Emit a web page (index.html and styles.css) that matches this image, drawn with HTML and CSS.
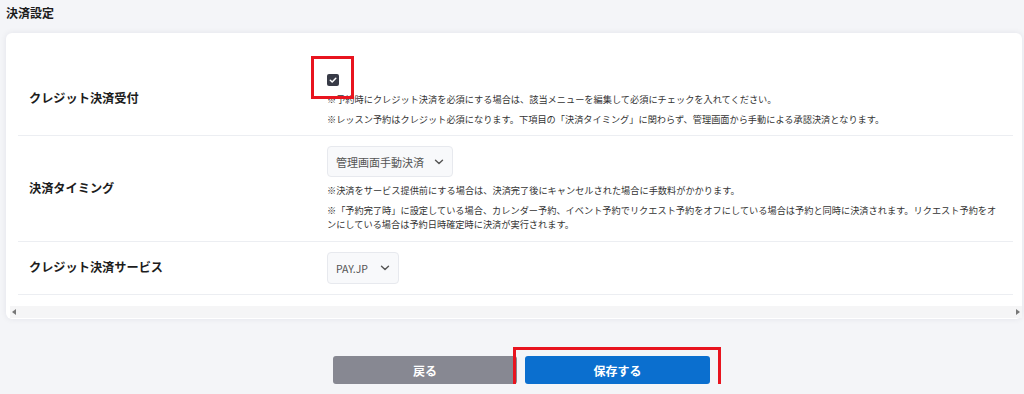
FILE: index.html
```html
<!DOCTYPE html>
<html lang="ja">
<head>
  <meta charset="UTF-8">
  <meta name="viewport" content="width=device-width, initial-scale=1.0">
  <title>決済設定</title>
  <link rel="stylesheet" href="styles.css">
</head>
<body>
  <h2 class="page-title">決済設定</h2>

  <div class="card">
    <div class="row row-first">
      <div class="label">クレジット決済受付</div>
      <div class="field">
        <span class="checkbox">
          <svg width="8" height="8" viewBox="0 0 8 8"><path d="M1.3 4.2 L3.2 6 L6.8 2.2" fill="none" stroke="#fff" stroke-width="1.5" stroke-linecap="round" stroke-linejoin="round"/></svg>
          <span class="mark mark-check"></span>
        </span>
        <p class="note">※予約時にクレジット決済を必須にする場合は、該当メニューを編集して必須にチェックを入れてください。</p>
        <p class="note">※レッスン予約はクレジット必須になります。下項目の「決済タイミング」に関わらず、管理画面から手動による承認決済となります。</p>
      </div>
    </div>

    <div class="row">
      <div class="label">決済タイミング</div>
      <div class="field">
        <div class="select select-wide">
          <span>管理画面手動決済</span>
          <svg width="10" height="6" viewBox="0 0 10 6"><path d="M1.5 1.2 L5 4.6 L8.5 1.2" fill="none" stroke="#555" stroke-width="1.4" stroke-linecap="round" stroke-linejoin="round"/></svg>
        </div>
        <p class="note">※決済をサービス提供前にする場合は、決済完了後にキャンセルされた場合に手数料がかかります。</p>
        <p class="note">※「予約完了時」に設定している場合、カレンダー予約、イベント予約でリクエスト予約をオフにしている場合は予約と同時に決済されます。リクエスト予約をオンにしている場合は予約日時確定時に決済が実行されます。</p>
      </div>
    </div>

    <div class="row">
      <div class="label">クレジット決済サービス</div>
      <div class="field">
        <div class="select select-small">
          <span>PAY.JP</span>
          <svg width="10" height="6" viewBox="0 0 10 6"><path d="M1.5 1.2 L5 4.6 L8.5 1.2" fill="none" stroke="#555" stroke-width="1.4" stroke-linecap="round" stroke-linejoin="round"/></svg>
        </div>
      </div>
    </div>

    <div class="scrollbar">
      <span class="arrow arrow-left"></span>
      <span class="arrow arrow-right"></span>
    </div>
  </div>

  <div class="actions">
    <button class="btn btn-back">戻る</button>
    <div class="save-frame">
      <button class="btn btn-save">保存する</button>
    </div>
  </div>
</body>
</html>
```

FILE: styles.css
```css
body {
  margin: 0;
  padding: 6px 2px 0 6px;
  background-color: #f4f5f8;
  font-family: "Noto Sans CJK JP", "Noto Sans", sans-serif;
  color: #222;
}
.page-title {
  margin: 0;
  font-size: 12px;
  line-height: 14px;
  font-weight: bold;
  color: #1c1c1c;
}
.card {
  margin-top: 13px;
  background-color: white;
  border-radius: 6px;
  box-shadow: 0 0 6px rgba(20,30,60,0.08);
  padding: 31px 9px 1px 12px;
}
.row {
  display: flex;
  align-items: center;
  padding: 10px 0 10px 11px;
  border-bottom: 1px solid #eceef2;
}
.row-first {
  padding-bottom: 9px;
}
.row-first .label {
  padding-bottom: 4px;
}
.label {
  width: 298px;
  flex-shrink: 0;
  padding-bottom: 2px;
  font-size: 12.2px;
  font-weight: bold;
  color: #1c1c1c;
}
.field {
  flex: 1;
  padding-right: 14px;
}
.checkbox {
  position: relative;
  display: flex;
  align-items: center;
  justify-content: center;
  width: 12px;
  height: 12px;
  border-radius: 2px;
  background-color: #383b47;
}
.mark {
  position: absolute;
  border: 3px solid #e8141f;
}
.mark-check {
  left: -16px;
  right: -15px;
  top: -18px;
  bottom: -13px;
}
.note {
  margin: 6px 0 0;
  font-size: 9.2px;
  line-height: 14px;
  color: #333;
}
.select {
  display: flex;
  align-items: center;
  justify-content: space-between;
  box-sizing: border-box;
  height: 31px;
  padding: 0 8px;
  background-color: #f8f9fb;
  border: 1px solid #e7e9ee;
  border-radius: 4px;
  font-size: 11px;
  color: #555;
}
.select-wide {
  width: 126px;
}
.select-small {
  width: 72px;
  height: 32px;
  font-size: 10.5px;
}
.scrollbar {
  position: relative;
  height: 12px;
  margin: 11px -9px 0 -8px;
  background-color: #f5f5f6;
}
.arrow {
  position: absolute;
  top: 3px;
  width: 0;
  height: 0;
  border-top: 3px solid transparent;
  border-bottom: 3px solid transparent;
}
.arrow-left {
  left: 2px;
  border-right: 4px solid #777;
}
.arrow-right {
  right: 2px;
  border-left: 4px solid #777;
}
.actions {
  display: flex;
  justify-content: center;
  align-items: center;
  gap: 8px;
  margin-top: 37px;
  padding-left: 15px;
}
.save-frame {
  display: flex;
  padding: 6px 8px 6px 9px;
  margin: -9px -11px -9px -12px;
  border: 3px solid #e8141f;
}
.btn {
  width: 185px;
  height: 28px;
  border: none;
  border-radius: 3px;
  font-family: inherit;
  font-size: 12px;
  font-weight: bold;
  color: white;
  cursor: pointer;
}
.btn-back {
  width: 184px;
  background-color: #878892;
}
.btn-save {
  background-color: #0b6fcf;
}
```
